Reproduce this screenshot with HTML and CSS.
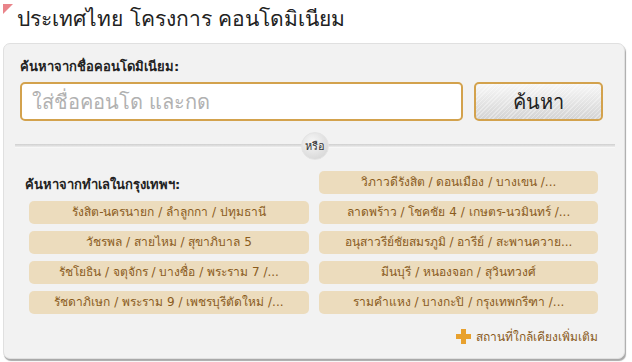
FILE: index.html
```html
<!DOCTYPE html>
<html>
<head>
  <meta charset="UTF-8">
  <title>คอนโดมิเนียม</title>
  <link rel="stylesheet" href="styles.css">
</head>
<body>
  <div class="pageTitle">
    <span class="titleMark"></span>
    <h1>ประเทศไทย โครงการ คอนโดมิเนียม</h1>
  </div>

  <div class="searchPanel">
    <!-- search by name -->
    <div class="sectionLabel">ค้นหาจากชื่อคอนโดมิเนียม:</div>
    <div class="searchRow">
      <input class="nameInput" type="text" placeholder="ใส่ชื่อคอนโด และกด">
      <button class="searchButton">ค้นหา</button>
    </div>

    <div class="orDivider">
      <span class="orBadge">หรือ</span>
    </div>

    <!-- search by area -->
    <div class="areaGrid">
      <div class="sectionLabel areaLabel">ค้นหาจากทำเลในกรุงเทพฯ:</div>
      <a class="areaButton" href="#">วิภาวดีรังสิต / ดอนเมือง / บางเขน /...</a>
      <a class="areaButton" href="#">รังสิต-นครนายก / ลำลูกกา / ปทุมธานี</a>
      <a class="areaButton" href="#">ลาดพร้าว / โชคชัย 4 / เกษตร-นวมินทร์ /...</a>
      <a class="areaButton" href="#">วัชรพล / สายไหม / สุขาภิบาล 5</a>
      <a class="areaButton" href="#">อนุสาวรีย์ชัยสมรภูมิ / อารีย์ / สะพานควาย...</a>
      <a class="areaButton" href="#">รัชโยธิน / จตุจักร / บางซื่อ / พระราม 7 /...</a>
      <a class="areaButton" href="#">มีนบุรี / หนองจอก / สุวินทวงศ์</a>
      <a class="areaButton" href="#">รัชดาภิเษก / พระราม 9 / เพชรบุรีตัดใหม่ /...</a>
      <a class="areaButton" href="#">รามคำแหง / บางกะปิ / กรุงเทพกรีฑา /...</a>
    </div>

    <div class="moreRow">
      <a class="moreLink" href="#"><span class="plusIcon"></span>สถานที่ใกล้เคียงเพิ่มเติม</a>
    </div>
  </div>
</body>
</html>
```

FILE: styles.css
```css
body {
  margin: 0;
  padding: 0;
  background: #fff;
  font-family: Tahoma, "DejaVu Sans", "Noto Sans", sans-serif;
  color: #222;
}

.pageTitle {
  display: flex;
  align-items: flex-start;
  height: 43px;
  padding-left: 3px;
}
.titleMark {
  width: 0;
  height: 0;
  margin-top: 4px;
  border-top: 10px solid #e9848a;
  border-right: 10px solid transparent;
}
.pageTitle h1 {
  margin: 6px 0 0 4px;
  font-size: 21px;
  font-weight: normal;
  line-height: 26px;
  color: #222;
}

.searchPanel {
  margin: 0 7px 6px 3px;
  padding: 15px 21px 12px 16px;
  background: #f2f2f2;
  border: 1px solid #e0e0e0;
  border-radius: 7px;
  box-shadow: 1px 2px 1px #a9a9a9;
}

.sectionLabel {
  font-size: 13px;
  font-weight: bold;
  line-height: 16px;
  color: #222;
}

.searchRow {
  display: flex;
  gap: 11px;
  margin-top: 7px;
}
.nameInput {
  flex: 1;
  height: 39px;
  box-sizing: border-box;
  padding: 0 10px;
  border: 2px solid #d3a24d;
  border-radius: 5px;
  background: #fff;
  font-family: inherit;
  font-size: 20px;
  color: #222;
  outline: none;
}
.nameInput::placeholder {
  color: #b1b1b1;
}
.searchButton {
  width: 129px;
  height: 39px;
  border: 2px solid #d3a24d;
  border-radius: 5px;
  background:
    repeating-linear-gradient(135deg, rgba(255,255,255,0.35) 0 1px, transparent 1px 3px),
    linear-gradient(to bottom, #f7f7f7, #d4d4d4);
  font-family: inherit;
  font-size: 20px;
  font-weight: normal;
  color: #222;
  cursor: pointer;
}

.orDivider {
  height: 4px;
  margin: 23px -12px 0 -5px;
  background: linear-gradient(to bottom, #cfcfcf, #e6e6e6 60%, #ffffff);
  display: flex;
  justify-content: center;
  align-items: center;
}
.orBadge {
  width: 26px;
  height: 26px;
  border-radius: 50%;
  background: radial-gradient(circle at 40% 35%, #f7f7f7, #d0d0d0);
  border: 1px solid #e4e4e4;
  display: flex;
  align-items: center;
  justify-content: center;
  font-size: 11px;
  color: #333;
}

.areaGrid {
  display: grid;
  grid-template-columns: 280px 279px;
  column-gap: 10px;
  row-gap: 7px;
  margin-top: 23px;
  padding-left: 9px;
}
.areaLabel {
  align-self: end;
  margin-left: -4px;
  margin-bottom: 1px;
}
.areaButton {
  display: block;
  height: 23px;
  line-height: 23px;
  border-radius: 5px;
  background: #ecdcbd;
  color: #8a5b1c;
  font-size: 12px;
  text-align: center;
  text-decoration: none;
  white-space: nowrap;
  overflow: hidden;
}

.moreRow {
  display: flex;
  justify-content: flex-end;
  margin-top: 13px;
  padding-right: 5px;
}
.moreLink {
  display: flex;
  align-items: center;
  gap: 5px;
  font-size: 12px;
  color: #8a5b1c;
  text-decoration: none;
}
.plusIcon {
  width: 15px;
  height: 15px;
  background:
    linear-gradient(#e8a12e, #e8a12e) center / 15px 5px no-repeat,
    linear-gradient(#e8a12e, #e8a12e) center / 5px 15px no-repeat;
}
```
